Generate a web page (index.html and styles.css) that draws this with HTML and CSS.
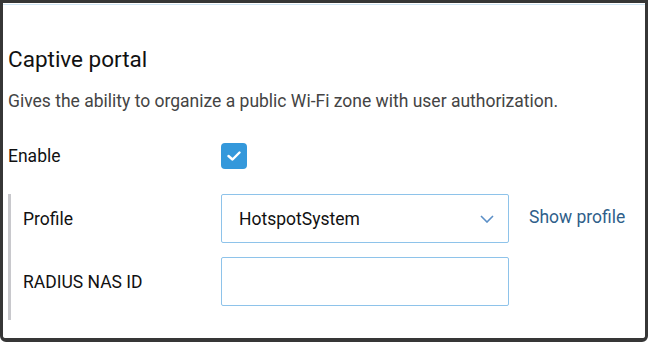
FILE: index.html
```html
<!DOCTYPE html>
<html lang="en">
<head>
    <meta charset="UTF-8">
    <title>Captive portal</title>
    <link rel="stylesheet" href="styles.css">
</head>
<body>

<div class="window">
    <div class="panel">
        <h2 class="panel-title">Captive portal</h2>
        <p class="panel-desc">Gives the ability to organize a public Wi-Fi zone with user authorization.</p>

        <div class="form-row">
            <label class="form-label">Enable</label>
            <span class="checkbox checked">
                <svg width="14" height="10" viewBox="0 0 14 10"><path d="M1.5 5 L5.5 8.5 L12.5 1.5" fill="none" stroke="#fff" stroke-width="2.4" stroke-linecap="round" stroke-linejoin="round"/></svg>
            </span>
        </div>

        <div class="sub-group">
            <div class="form-row sub-row">
                <label class="form-label">Profile</label>
                <div class="select">
                    <span>HotspotSystem</span>
                    <svg width="14" height="8" viewBox="0 0 14 8"><path d="M1 1 L7 7 L13 1" fill="none" stroke="#5b8fc7" stroke-width="1.6"/></svg>
                </div>
                <a class="link" href="#">Show profile</a>
            </div>
            <div class="form-row sub-row">
                <label class="form-label">RADIUS NAS ID</label>
                <input type="text" class="form-control">
            </div>
        </div>
    </div>
</div>

</body>
</html>
```

FILE: styles.css
```css
* {
    box-sizing: border-box;
    margin: 0;
    padding: 0;
}

html, body {
    height: 100%;
}

body {
    font-family: Roboto, "Liberation Sans", Arial, sans-serif;
    color: #1a1a1a;
    background: #ffffff;
}

.window {
    height: 342px;
    border: 3px solid #363636;
    border-bottom-width: 4px;
    border-radius: 0 0 6px 6px;
    background: #ffffff;
}

.panel {
    border-top: 1px solid #cfe6f5;
    margin-top: 1px;
    padding: 39px 0 0 5px;
}

.panel-title {
    font-size: 22.5px;
    font-weight: 400;
    line-height: 30px;
    color: #111;
}

.panel-desc {
    margin-top: 14px;
    font-size: 17.5px;
    line-height: 26px;
    color: #444;
}

.form-row {
    display: flex;
    align-items: center;
    margin-top: 29px;
}

.form-label {
    width: 213px;
    font-size: 17.5px;
    color: #111;
}

.checkbox {
    width: 26px;
    height: 26px;
    border-radius: 4px;
    background: #3498db;
    display: flex;
    align-items: center;
    justify-content: center;
}

.sub-group {
    margin-top: 25px;
    border-left: 3px solid #c8c8cc;
    padding: 0 0 14px 12px;
}

.sub-row {
    margin-top: 0;
}

.sub-row + .sub-row {
    margin-top: 14px;
}

.sub-row .form-label {
    width: 198px;
}

.select,
.form-control {
    width: 288px;
    height: 49px;
    border: 1px solid #8ec3ea;
    border-radius: 2px;
    background: #fff;
}

.select {
    display: flex;
    align-items: center;
    justify-content: space-between;
    padding: 0 14px 0 17px;
    font-size: 17.5px;
    color: #111;
}

.form-control {
    font-family: inherit;
    font-size: 17.5px;
    padding: 0 17px;
    outline: none;
}

.link {
    margin-left: 20px;
    margin-top: -3px;
    font-size: 17.5px;
    color: #2f5f8a;
    text-decoration: none;
}
```
